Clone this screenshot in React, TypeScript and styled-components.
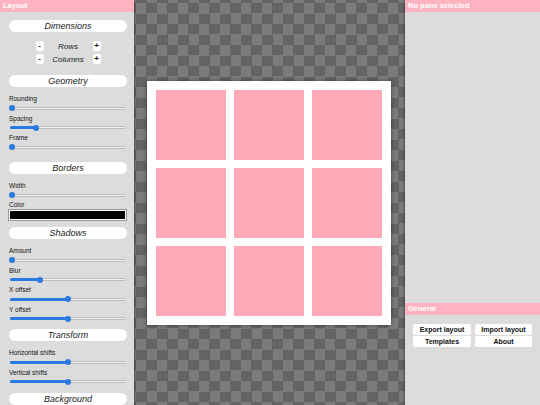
import React from "react";
import styled, { createGlobalStyle } from "styled-components";

const GlobalStyle = createGlobalStyle`
  html, body {
    margin: 0;
    padding: 0;
    width: 540px;
    height: 405px;
    overflow: hidden;
    font-family: "Liberation Sans", Arial, sans-serif;
  }
`;

const PINK_BAR = "#ffb3c1";
const PINK_TILE = "#ffaab9";
const PANEL = "#dcdcdc";
const BLUE = "#2a7ae4";

const Page = styled.div`
  display: flex;
  width: 540px;
  height: 405px;
`;

const SidePanel = styled.div<{ $side: "left" | "right" }>`
  width: ${(p) => (p.$side === "left" ? "134px" : "135px")};
  flex-shrink: 0;
  height: 100%;
  background: ${PANEL};
  display: flex;
  flex-direction: column;
  position: relative;
  z-index: 1;
  box-shadow: ${(p) =>
    p.$side === "left"
      ? "1px 0 2px rgba(0, 0, 0, 0.35)"
      : "-1px 0 2px rgba(0, 0, 0, 0.35)"};
  overflow: hidden;
`;

const TitleBar = styled.div`
  height: 12px;
  line-height: 12px;
  background: ${PINK_BAR};
  color: #fff;
  font-size: 7.5px;
  font-weight: bold;
  padding-left: 3px;
  flex-shrink: 0;
`;

const Controls = styled.div`
  padding: 0 7px 0 9px;
  display: flex;
  flex-direction: column;
`;

const Pill = styled.div<{ $top: number }>`
  margin-top: ${(p) => p.$top}px;
  height: 12px;
  line-height: 12px;
  border-radius: 6px;
  background: #fff;
  text-align: center;
  font-style: italic;
  font-size: 9px;
  color: #222;
  flex-shrink: 0;
`;

const CounterRows = styled.div`
  margin-top: 9px;
  display: flex;
  flex-direction: column;
  gap: 3px;
  align-items: center;
`;

const CounterRow = styled.div`
  display: grid;
  grid-template-columns: 8px 49px 8px;
  align-items: center;
  height: 10px;
`;

const StepButton = styled.div`
  width: 8px;
  height: 10px;
  background: #fff;
  border-radius: 2px;
  font-size: 8px;
  font-weight: bold;
  line-height: 10px;
  text-align: center;
  color: #111;
`;

const CounterLabel = styled.div`
  text-align: center;
  font-style: italic;
  font-size: 8px;
  color: #222;
`;

const Field = styled.div<{ $top: number }>`
  margin-top: ${(p) => p.$top}px;
  display: flex;
  flex-direction: column;
`;

const Label = styled.div`
  height: 9px;
  line-height: 9px;
  font-size: 6.5px;
  color: #111;
`;

const Track = styled.div`
  position: relative;
  height: 10px;
  margin: 0 1px;
`;

const Rail = styled.div`
  position: absolute;
  left: 0;
  right: 0;
  top: 3.5px;
  height: 3px;
  box-sizing: border-box;
  border-radius: 1.5px;
  background: #f1f1f1;
  border: 0.5px solid #bdbdbd;
`;

const Fill = styled.div`
  position: absolute;
  left: 0;
  top: 3.5px;
  height: 3px;
  border-radius: 1.5px;
  background: ${BLUE};
`;

const Thumb = styled.div`
  position: absolute;
  top: 2px;
  width: 6px;
  height: 6px;
  margin-left: -3px;
  border-radius: 50%;
  background: ${BLUE};
`;

const ColorBox = styled.div`
  height: 10px;
  box-sizing: border-box;
  border: 1px solid #fff;
  outline: 0.5px solid #999;
  background: #000;
  margin: 1px 1px 0 0;
`;

const Canvas = styled.div`
  flex: 1;
  height: 100%;
  display: flex;
  align-items: center;
  justify-content: center;
  background-color: #7b7b7b;
  background-image: conic-gradient(
    #646464 0 25%,
    transparent 0 50%,
    #646464 0 75%,
    transparent 0
  );
  background-size: 21px 21px;
  background-position: 2px 3px;
`;

const Frame = styled.div`
  width: 244px;
  height: 244px;
  box-sizing: border-box;
  padding: 9px;
  background: #fff;
  box-shadow: 0 0 4px rgba(0, 0, 0, 0.45);
  display: grid;
  grid-template-columns: repeat(3, 70px);
  grid-template-rows: repeat(3, 70px);
  gap: 8px;
  margin-left: -2px;
`;

const Tile = styled.div`
  background: ${PINK_TILE};
`;

const Spacer = styled.div`
  flex: 1;
`;

const GeneralSection = styled.div`
  height: 102px;
  flex-shrink: 0;
  display: flex;
  flex-direction: column;
`;

const ButtonGrid = styled.div`
  margin: 9px 8px 0 8px;
  display: grid;
  grid-template-columns: 58px 57px;
  grid-auto-rows: 11px;
  column-gap: 4px;
  row-gap: 1px;
`;

const ActionButton = styled.div`
  background: #fff;
  border-radius: 2px;
  font-size: 7px;
  font-weight: bold;
  color: #111;
  text-align: center;
  line-height: 11px;
`;

const Slider = ({ value }: { value: number }) => (
  <Track>
    <Rail />
    <Fill style={{ width: `${value}%` }} />
    <Thumb style={{ left: `${value}%` }} />
  </Track>
);

const SliderField = ({
  label,
  value,
  top,
}: {
  label: string;
  value: number;
  top: number;
}) => (
  <Field $top={top}>
    <Label>{label}</Label>
    <Slider value={value} />
  </Field>
);

const Counter = ({ label }: { label: string }) => (
  <CounterRow>
    <StepButton>-</StepButton>
    <CounterLabel>{label}</CounterLabel>
    <StepButton>+</StepButton>
  </CounterRow>
);

const App = () => {
  return (
    <>
      <GlobalStyle />
      <Page>
        <SidePanel $side="left">
          <TitleBar>Layout</TitleBar>
          <Controls>
            <Pill $top={8}>Dimensions</Pill>
            <CounterRows>
              <Counter label="Rows" />
              <Counter label="Columns" />
            </CounterRows>

            <Pill $top={11}>Geometry</Pill>
            <SliderField label="Rounding" value={2} top={7} />
            <SliderField label="Spacing" value={22} top={0.5} />
            <SliderField label="Frame" value={2} top={0.5} />

            <Pill $top={10}>Borders</Pill>
            <SliderField label="Width" value={2} top={7} />
            <Field $top={0}>
              <Label>Color</Label>
              <ColorBox />
            </Field>

            <Pill $top={7}>Shadows</Pill>
            <SliderField label="Amount" value={2} top={7} />
            <SliderField label="Blur" value={26} top={0.5} />
            <SliderField label="X offset" value={50} top={0.5} />
            <SliderField label="Y offset" value={50} top={0.5} />

            <Pill $top={5.5}>Transform</Pill>
            <SliderField label="Horizontal shifts" value={50} top={7} />
            <SliderField label="Vertical shifts" value={50} top={0.5} />

            <Pill $top={6}>Background</Pill>
          </Controls>
        </SidePanel>

        <Canvas>
          <Frame>
            {Array.from({ length: 9 }).map((_, i) => (
              <Tile key={i} />
            ))}
          </Frame>
        </Canvas>

        <SidePanel $side="right">
          <TitleBar>No pane selected</TitleBar>
          <Spacer />
          <GeneralSection>
            <TitleBar>General</TitleBar>
            <ButtonGrid>
              <ActionButton>Export layout</ActionButton>
              <ActionButton>Import layout</ActionButton>
              <ActionButton>Templates</ActionButton>
              <ActionButton>About</ActionButton>
            </ButtonGrid>
          </GeneralSection>
        </SidePanel>
      </Page>
    </>
  );
};

export default App;
